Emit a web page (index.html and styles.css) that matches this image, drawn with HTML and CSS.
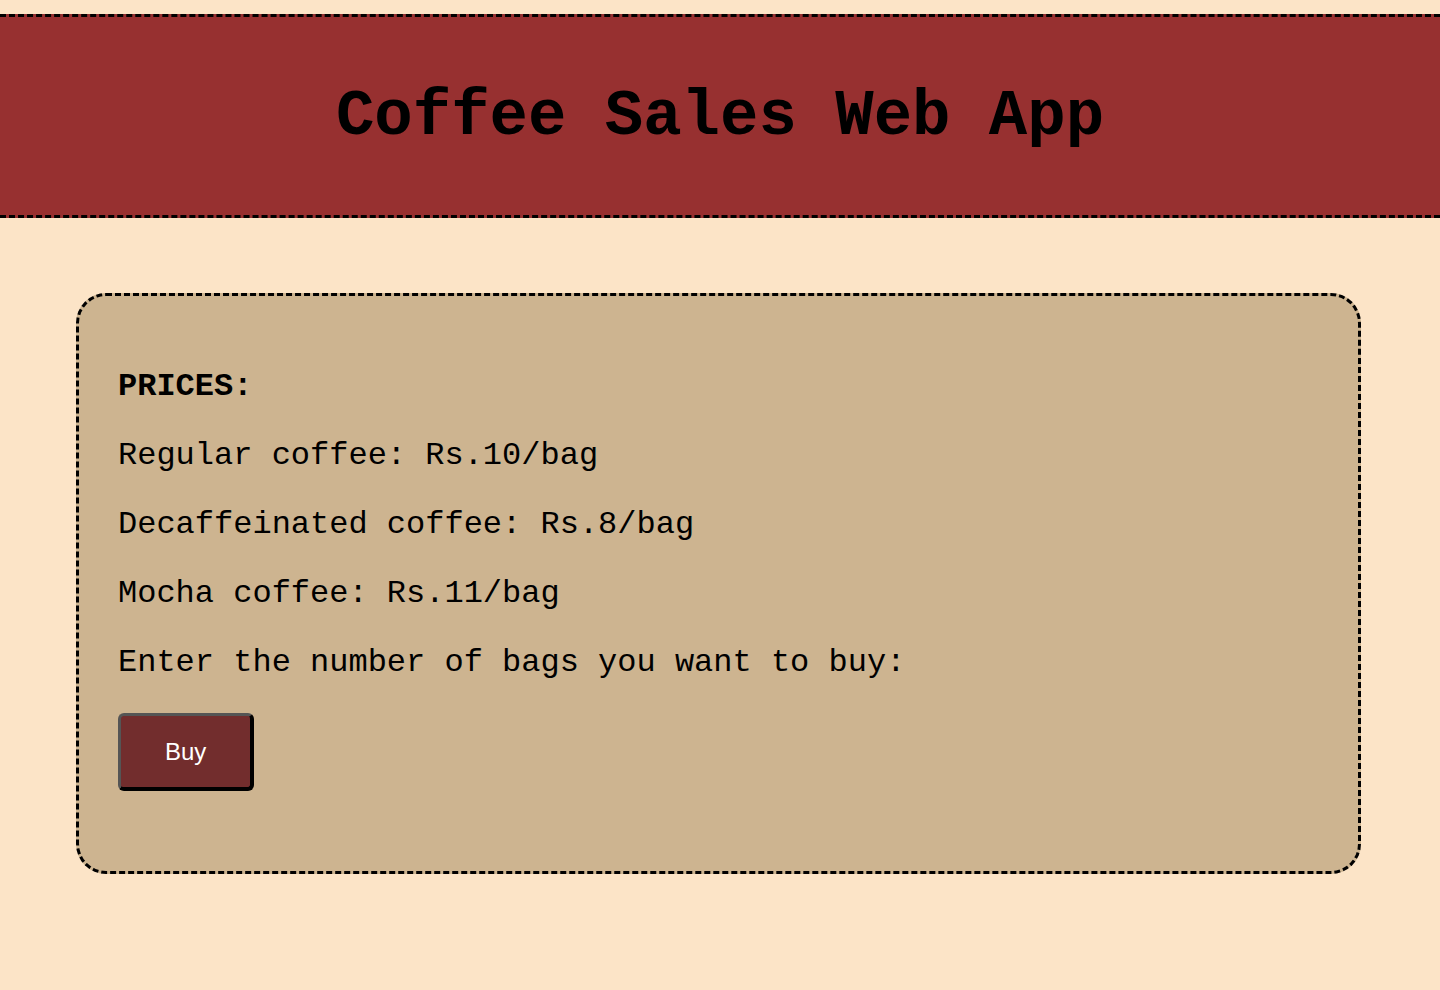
FILE: index.html
```html
<!DOCTYPE html>
<html lang="en">
<head>
<meta charset="utf-8">
<title>Coffee Sales Web App</title>
<link rel="stylesheet" href="styles.css">
</head>
<body>
  <header class="site-header">
    <h1 class="title">Coffee Sales Web App</h1>
  </header>
  <main class="card">
    <p class="line"><strong>PRICES:</strong></p>
    <p class="line">Regular coffee: Rs.10/bag</p>
    <p class="line">Decaffeinated coffee: Rs.8/bag</p>
    <p class="line">Mocha coffee: Rs.11/bag</p>
    <p class="line">Enter the number of bags you want to buy:</p>
    <button class="buy" type="button">Buy</button>
  </main>
</body>
</html>
```

FILE: styles.css
```css
html, body {
  margin: 0;
  padding: 0;
}

body {
  background: #fce4c7;
  font-family: "Liberation Mono", "Courier New", monospace;
  color: #000;
  min-height: 990px;
}

.site-header {
  margin-top: 14px;
  background: #973030;
  border-top: 3px dashed #000;
  border-bottom: 3px dashed #000;
  padding: 64px 0 62px;
  text-align: center;
}

.title {
  margin: 0;
  font-size: 64px;
  line-height: 72px;
  font-weight: bold;
}

.card {
  display: block;
  margin: 75px 79px 0 76px;
  background: #cdb490;
  border: 3px dashed #000;
  border-radius: 30px;
  padding: 40px 39px 80px;
}

.line {
  margin: 32px 0;
  font-size: 32px;
  line-height: 37px;
}

.line strong {
  font-weight: bold;
}

.buy {
  display: block;
  margin: 0;
  background: #722d2d;
  color: #fff;
  font-family: "Liberation Sans", Arial, sans-serif;
  font-size: 24px;
  line-height: 28px;
  padding: 22px 44px 21px;
  border-style: solid;
  border-width: 3px 4px 4px 3px;
  border-color: #555 #000 #000 #555;
  border-radius: 6px;
}
```
